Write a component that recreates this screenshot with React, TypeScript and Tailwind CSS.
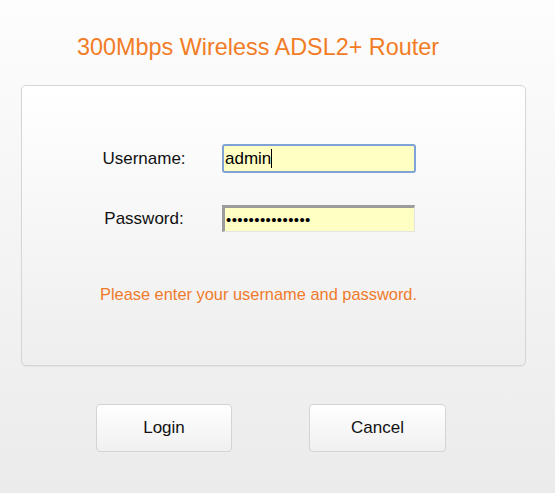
import React from 'react';

const font = { fontFamily: '"Liberation Sans", Arial, sans-serif' };

const FieldRow: React.FC<{ label: string; children: React.ReactNode }> = ({ label, children }) => (
    <div className="flex items-center h-[29px] pl-[44px]">
        <div className="w-[156px] text-center text-[17px] leading-none text-[#111]">{label}</div>
        {children}
    </div>
);

export default function App() {
    return (
        <div
            className="w-[555px] h-[493px] overflow-hidden bg-gradient-to-b from-[#fdfdfd] to-[#ebebeb] font-['Liberation_Sans',Arial,sans-serif]"
            style={font}
        >
            <h1 className="pt-[33px] w-[516px] text-center text-[23.4px] leading-[28px] text-[#f27c26]">
                300Mbps Wireless ADSL2+ Router
            </h1>

            <div className="mt-[24px] ml-[21px] w-[505px] h-[281px] pt-[58px] rounded-[5px] border border-[#d6d6d6] bg-gradient-to-b from-[#ffffff] to-[#eeeeee] shadow-[0_1px_1px_rgba(0,0,0,0.05)]">
                <FieldRow label="Username:">
                    <div className="flex items-center w-[194px] h-[29px] pl-[1px] rounded-[3px] border-2 border-[#7fa3d6] bg-[#ffffc3] text-[17px] text-black">
                        <span>admin</span>
                        <span className="w-px h-[19px] bg-black" />
                    </div>
                </FieldRow>

                <div className="mt-[31px]">
                    <FieldRow label="Password:">
                        <div className="flex items-center w-[193px] h-[27px] pl-[1px] border-t-[3px] border-l-[3px] border-r border-b border-t-[#9c9c9c] border-l-[#9c9c9c] border-r-[#e4e4e4] border-b-[#e4e4e4] bg-[#ffffc3] text-[15px] leading-none text-black tracking-[0.4px]">
                            •••••••••••••••
                        </div>
                    </FieldRow>
                </div>

                <p className="mt-[51px] w-[473px] text-center text-[16.4px] leading-[20px] text-[#f07a2a]">
                    Please enter your username and password.
                </p>
            </div>

            <div className="flex mt-[38px] ml-[96px] gap-[77px]">
                <button className="w-[136px] h-[48px] rounded-[4px] border border-[#d4d4d4] bg-gradient-to-b from-[#ffffff] to-[#f0f0f0] text-[17px] text-[#111]">
                    Login
                </button>
                <button className="w-[137px] h-[48px] rounded-[4px] border border-[#d4d4d4] bg-gradient-to-b from-[#ffffff] to-[#f0f0f0] text-[17px] text-[#111]">
                    Cancel
                </button>
            </div>
        </div>
    );
}
